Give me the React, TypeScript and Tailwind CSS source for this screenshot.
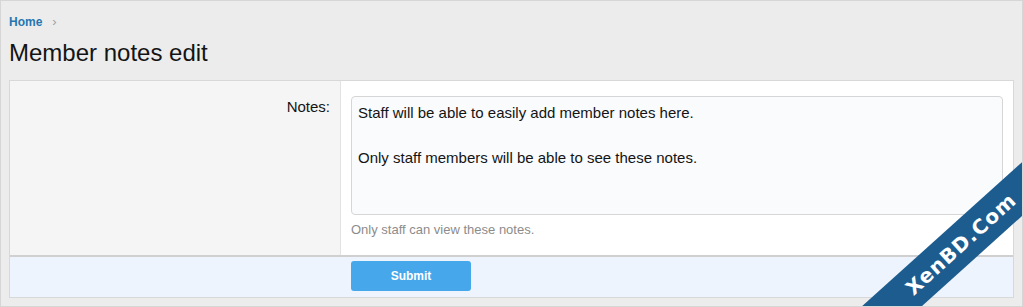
export default function App() {
  return (
    <div className="relative h-[307px] w-[1023px] overflow-hidden border border-[#d6d6d6] bg-[#ececec] font-['Liberation_Sans',Arial,sans-serif]">
      <div className="px-[8px] pt-[13px]">
        {/* breadcrumb */}
        <div className="flex items-center gap-[10px] text-[12px] leading-[16px]">
          <a className="font-bold text-[#2577b1]">Home</a>
          <span className="text-[13px] text-[#a0a0a0]">›</span>
        </div>
        <h1 className="mt-[8px] text-[24px] leading-[30px] text-[#141414]">Member notes edit</h1>

        {/* form block */}
        <div className="mt-[12px] w-[1005px] border border-[#d8d8d8] bg-white">
          <div className="flex">
            <div className="w-[331px] border-r border-[#e2e2e2] bg-[#f5f5f5] pr-[10px] pt-[15px] text-right text-[15px] leading-[22px] text-[#141414]">
              Notes:
            </div>
            <div className="flex-1 pl-[10px] pr-[10px] pt-[15px] pb-[17px]">
              <div className="h-[119px] rounded-[4px] border border-[#d6d6d6] bg-[#f9fbfd] px-[6px] pt-[5px] text-[15px] leading-[22px] text-[#141414]">
                <p>Staff will be able to easily add member notes here.</p>
                <p className="mt-[23px]">Only staff members will be able to see these notes.</p>
              </div>
              <div className="mt-[7px] text-[13px] leading-[16px] text-[#8c8c8c]">
                Only staff can view these notes.
              </div>
            </div>
          </div>
          <div className="flex h-[42px] border-t-2 border-[#d0d0d0] bg-[#edf4fd] pt-[4px]">
            <div className="w-[341px]" />
            <button className="h-[30px] w-[120px] rounded-[3px] bg-[#47a7eb] text-[12px] font-bold text-white">
              Submit
            </button>
          </div>
        </div>
      </div>

      {/* watermark ribbon */}
      <div className="absolute left-[810px] top-[223px] flex h-[40px] w-[300px] -rotate-[42deg] items-center justify-center bg-[#1d5c8e]">
        <span className="text-[20px] font-bold tracking-[1px] text-white font-['DejaVu_Sans',sans-serif]">XenBD.Com</span>
      </div>
    </div>
  );
}
